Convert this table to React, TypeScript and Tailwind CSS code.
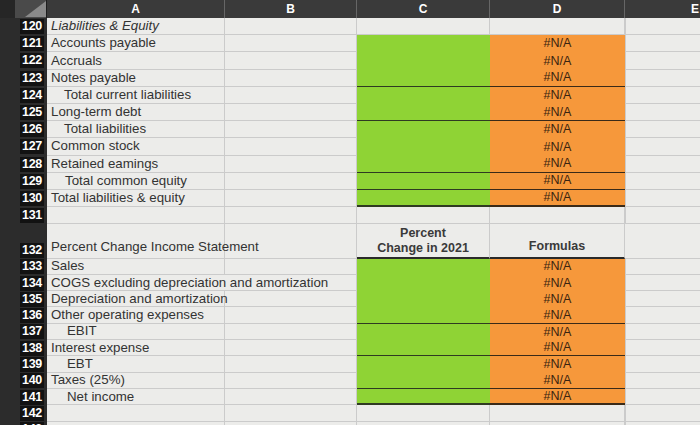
import React from "react";

type Row = {
  n: number;
  label?: string;
  indent?: number;
  italic?: boolean;
  fill?: boolean;
  border?: "thin" | "thick";
  h: string;
  overflow?: boolean;
};

const W = {
  rn: "w-[47px]",
  a: "w-[178px]",
  b: "w-[132px]",
  c: "w-[133px]",
  d: "w-[135px]",
};

const rows: Row[] = [
  { n: 120, label: "Liabilities & Equity", italic: true, h: "h-[17.2px]" },
  { n: 121, label: "Accounts payable", fill: true, h: "h-[17.2px]" },
  { n: 122, label: "Accruals", fill: true, h: "h-[17.2px]" },
  { n: 123, label: "Notes payable", fill: true, border: "thin", h: "h-[17.2px]" },
  { n: 124, label: "Total current liabilities", indent: 13, fill: true, h: "h-[17.2px]" },
  { n: 125, label: "Long-term debt", fill: true, border: "thin", h: "h-[17.2px]" },
  { n: 126, label: "Total liabilities", indent: 13, fill: true, h: "h-[17.2px]" },
  { n: 127, label: "Common stock", fill: true, h: "h-[17.2px]" },
  { n: 128, label: "Retained eamings", fill: true, border: "thin", h: "h-[17.2px]" },
  { n: 129, label: "Total common equity", indent: 14, fill: true, border: "thin", h: "h-[17.2px]" },
  { n: 130, label: "Total liabilities & equity", fill: true, border: "thick", h: "h-[17.2px]" },
  { n: 131, h: "h-[16.5px]" },
];

const rows2: Row[] = [
  { n: 133, label: "Sales", fill: true, h: "h-[16.3px]" },
  { n: 134, label: "COGS excluding depreciation and amortization", fill: true, h: "h-[16.3px]", overflow: true },
  { n: 135, label: "Depreciation and amortization", fill: true, h: "h-[16.3px]" },
  { n: 136, label: "Other operating expenses", fill: true, border: "thin", h: "h-[16.3px]" },
  { n: 137, label: "EBIT", indent: 16, fill: true, h: "h-[16.3px]" },
  { n: 138, label: "Interest expense", fill: true, border: "thin", h: "h-[16.3px]" },
  { n: 139, label: "EBT", indent: 16, fill: true, h: "h-[16.3px]" },
  { n: 140, label: "Taxes (25%)", fill: true, border: "thin", h: "h-[16.3px]" },
  { n: 141, label: "Net income", indent: 16, fill: true, border: "thick", h: "h-[16.3px]" },
  { n: 142, h: "h-[16.3px]" },
  { n: 143, h: "h-[16.3px]" },
];

function RowNum({ n, h, align = "center" }: { n?: number; h: string; align?: "center" | "end" }) {
  return (
    <div
      className={`${W.rn} ${h} shrink-0 bg-[#2c2c2c] flex justify-end pr-[3px] ${
        align === "end" ? "items-end pb-[1px]" : "items-center"
      }`}
    >
      {n !== undefined && (
        <span className="bg-[#121212] text-white font-bold text-[12.5px] leading-[15px] px-[2px] tracking-[-0.3px]">
          {n}
        </span>
      )}
    </div>
  );
}

function DataRow({ r }: { r: Row }) {
  const borderCls =
    r.border === "thick"
      ? "border-b-[2px] border-b-[#2f3a22]"
      : r.border === "thin"
      ? "border-b-[1.5px] border-b-[#2f3a22]"
      : r.fill
      ? ""
      : "border-b border-b-[#cbcbcb]";
  const dBorder =
    r.border === "thick"
      ? "border-b-[2px] border-b-[#3a2a18]"
      : r.border === "thin"
      ? "border-b-[1.5px] border-b-[#3a2a18]"
      : r.fill
      ? ""
      : "border-b border-b-[#cbcbcb]";
  return (
    <div className={`flex ${r.h}`}>
      <RowNum n={r.n} h={r.h} />
      <div
        className={`${W.a} shrink-0 border-b border-[#cbcbcb] ${
          r.overflow ? "" : "border-r"
        } relative z-10 flex items-center text-[13.3px] text-[#333333] whitespace-nowrap overflow-visible ${
          r.italic ? "italic" : ""
        }`}
        style={{ paddingLeft: 4 + (r.indent ?? 0) }}
      >
        {r.label}
      </div>
      <div className={`${W.b} shrink-0 border-b border-r border-[#cbcbcb]`} />
      <div
        className={`${W.c} shrink-0 ${
          r.fill ? "bg-[#8fd335]" : "border-r border-[#cbcbcb]"
        } ${borderCls}`}
      />
      <div
        className={`${W.d} shrink-0 flex items-center justify-center text-[12.5px] text-[#3a2410] ${
          r.fill ? "bg-[#f6983b]" : "border-r border-[#cbcbcb]"
        } ${dBorder}`}
      >
        {r.fill ? "#N/A" : ""}
      </div>
      <div className="flex-1 border-b border-l border-[#cbcbcb]" />
    </div>
  );
}

export default function App() {
  return (
    <div
      className="w-[700px] h-[425px] overflow-hidden bg-[#ececea]"
      style={{ fontFamily: '"Liberation Sans", Arial, sans-serif' }}
    >
      {/* column header */}
      <div className="flex h-[18px] bg-[#3a3a3a] text-white font-bold text-[12px]">
        <div className={`${W.rn} shrink-0 bg-[#2a2a2a] flex`}>
          <div className="w-[15px] bg-[#262626]" />
          <div className="flex-1 bg-[#4a4a4a] relative overflow-hidden border-r border-[#1e1e1e]">
            <svg className="absolute inset-0" width="32" height="18" viewBox="0 0 32 18">
              <polygon points="31,1 31,17 10,17" fill="#8a8a8a" />
            </svg>
          </div>
        </div>
        <div className={`${W.a} shrink-0 flex items-center justify-center border-r border-[#666]`}>A</div>
        <div className={`${W.b} shrink-0 flex items-center justify-center border-r border-[#666]`}>B</div>
        <div className={`${W.c} shrink-0 flex items-center justify-center border-r border-[#666]`}>C</div>
        <div className={`${W.d} shrink-0 flex items-center justify-center border-r border-[#666]`}>D</div>
        <div className="flex-1 flex items-center justify-end pr-[1px]">E</div>
      </div>

      {rows.map((r) => (
        <DataRow key={r.n} r={r} />
      ))}

      {/* row 132 header row */}
      <div className="flex h-[35px]">
        <RowNum n={132} h="h-[35px]" align="end" />
        <div className={`${W.a} shrink-0 border-b border-r border-[#cbcbcb] flex items-end pl-[4px] pb-[1px] text-[13.3px] text-[#333333] whitespace-nowrap`}>
          Percent Change Income Statement
        </div>
        <div className={`${W.b} shrink-0 border-b border-r border-[#cbcbcb]`} />
        <div className={`${W.c} shrink-0 border-r border-[#cbcbcb] border-b-[2px] border-b-[#2a2a2a] flex flex-col items-center justify-end pb-[1px] text-[12.5px] font-bold text-[#3a3a3a] leading-[15px]`}>
          <span>Percent</span>
          <span>Change in 2021</span>
        </div>
        <div className={`${W.d} shrink-0 border-r border-[#cbcbcb] border-b-[2px] border-b-[#2a2a2a] flex items-end justify-center pb-[1px] text-[12.5px] font-bold text-[#3a3a3a]`}>
          Formulas
        </div>
        <div className="flex-1 border-b border-[#cbcbcb]" />
      </div>

      {rows2.map((r) => (
        <DataRow key={r.n} r={r} />
      ))}
    </div>
  );
}
